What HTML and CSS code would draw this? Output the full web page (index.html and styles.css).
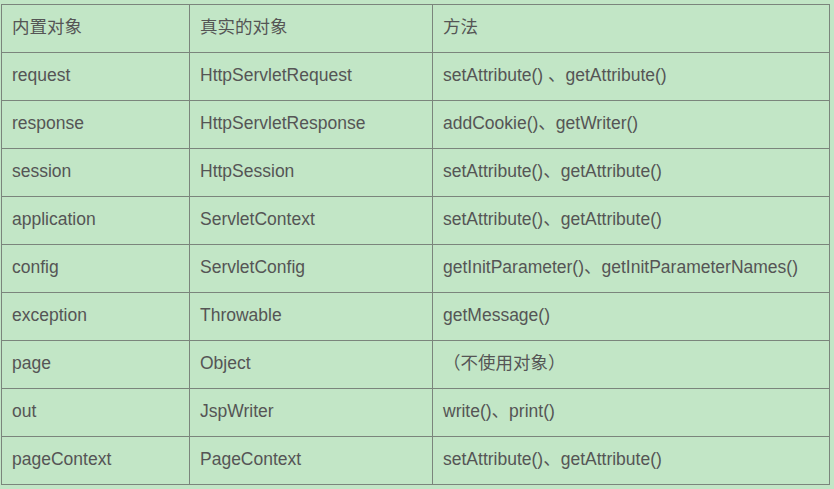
FILE: index.html
```html
<!DOCTYPE html>
<html lang="zh">
<head>
<meta charset="utf-8">
<link rel="stylesheet" href="styles.css">
</head>
<body>
<div class="wrap">
<table class="tbl">
<colgroup><col class="c1"><col class="c2"><col class="c3"></colgroup>
<tr><td>内置对象</td><td>真实的对象</td><td>方法</td></tr>
<tr><td>request</td><td>HttpServletRequest</td><td>setAttribute() 、getAttribute()</td></tr>
<tr><td>response</td><td>HttpServletResponse</td><td>addCookie()、getWriter()</td></tr>
<tr><td>session</td><td>HttpSession</td><td>setAttribute()、getAttribute()</td></tr>
<tr><td>application</td><td>ServletContext</td><td>setAttribute()、getAttribute()</td></tr>
<tr><td>config</td><td>ServletConfig</td><td>getInitParameter()、getInitParameterNames()</td></tr>
<tr><td>exception</td><td>Throwable</td><td>getMessage()</td></tr>
<tr><td>page</td><td>Object</td><td>（不使用对象）</td></tr>
<tr><td>out</td><td>JspWriter</td><td>write()、print()</td></tr>
<tr><td>pageContext</td><td>PageContext</td><td>setAttribute()、getAttribute()</td></tr>
</table>
</div>
</body>
</html>
```
FILE: styles.css
```css
html, body {
  margin: 0;
  padding: 0;
  background: #c2e6c6;
}
.wrap {
  padding: 4px 0 0 1px;
}
.tbl {
  border-collapse: collapse;
  table-layout: fixed;
  width: 828px;
  font-family: "Liberation Sans", Arial, "Noto Sans CJK SC", sans-serif;
  font-size: 17.5px;
  line-height: 20px;
  color: #555;
}
.c1 { width: 188px; }
.c2 { width: 243px; }
.c3 { width: 397px; }
.tbl td {
  border: 1px solid #7b857c;
  height: 48px;
  padding: 0 10px 3px;
  vertical-align: middle;
  box-sizing: border-box;
  white-space: nowrap;
}
```
